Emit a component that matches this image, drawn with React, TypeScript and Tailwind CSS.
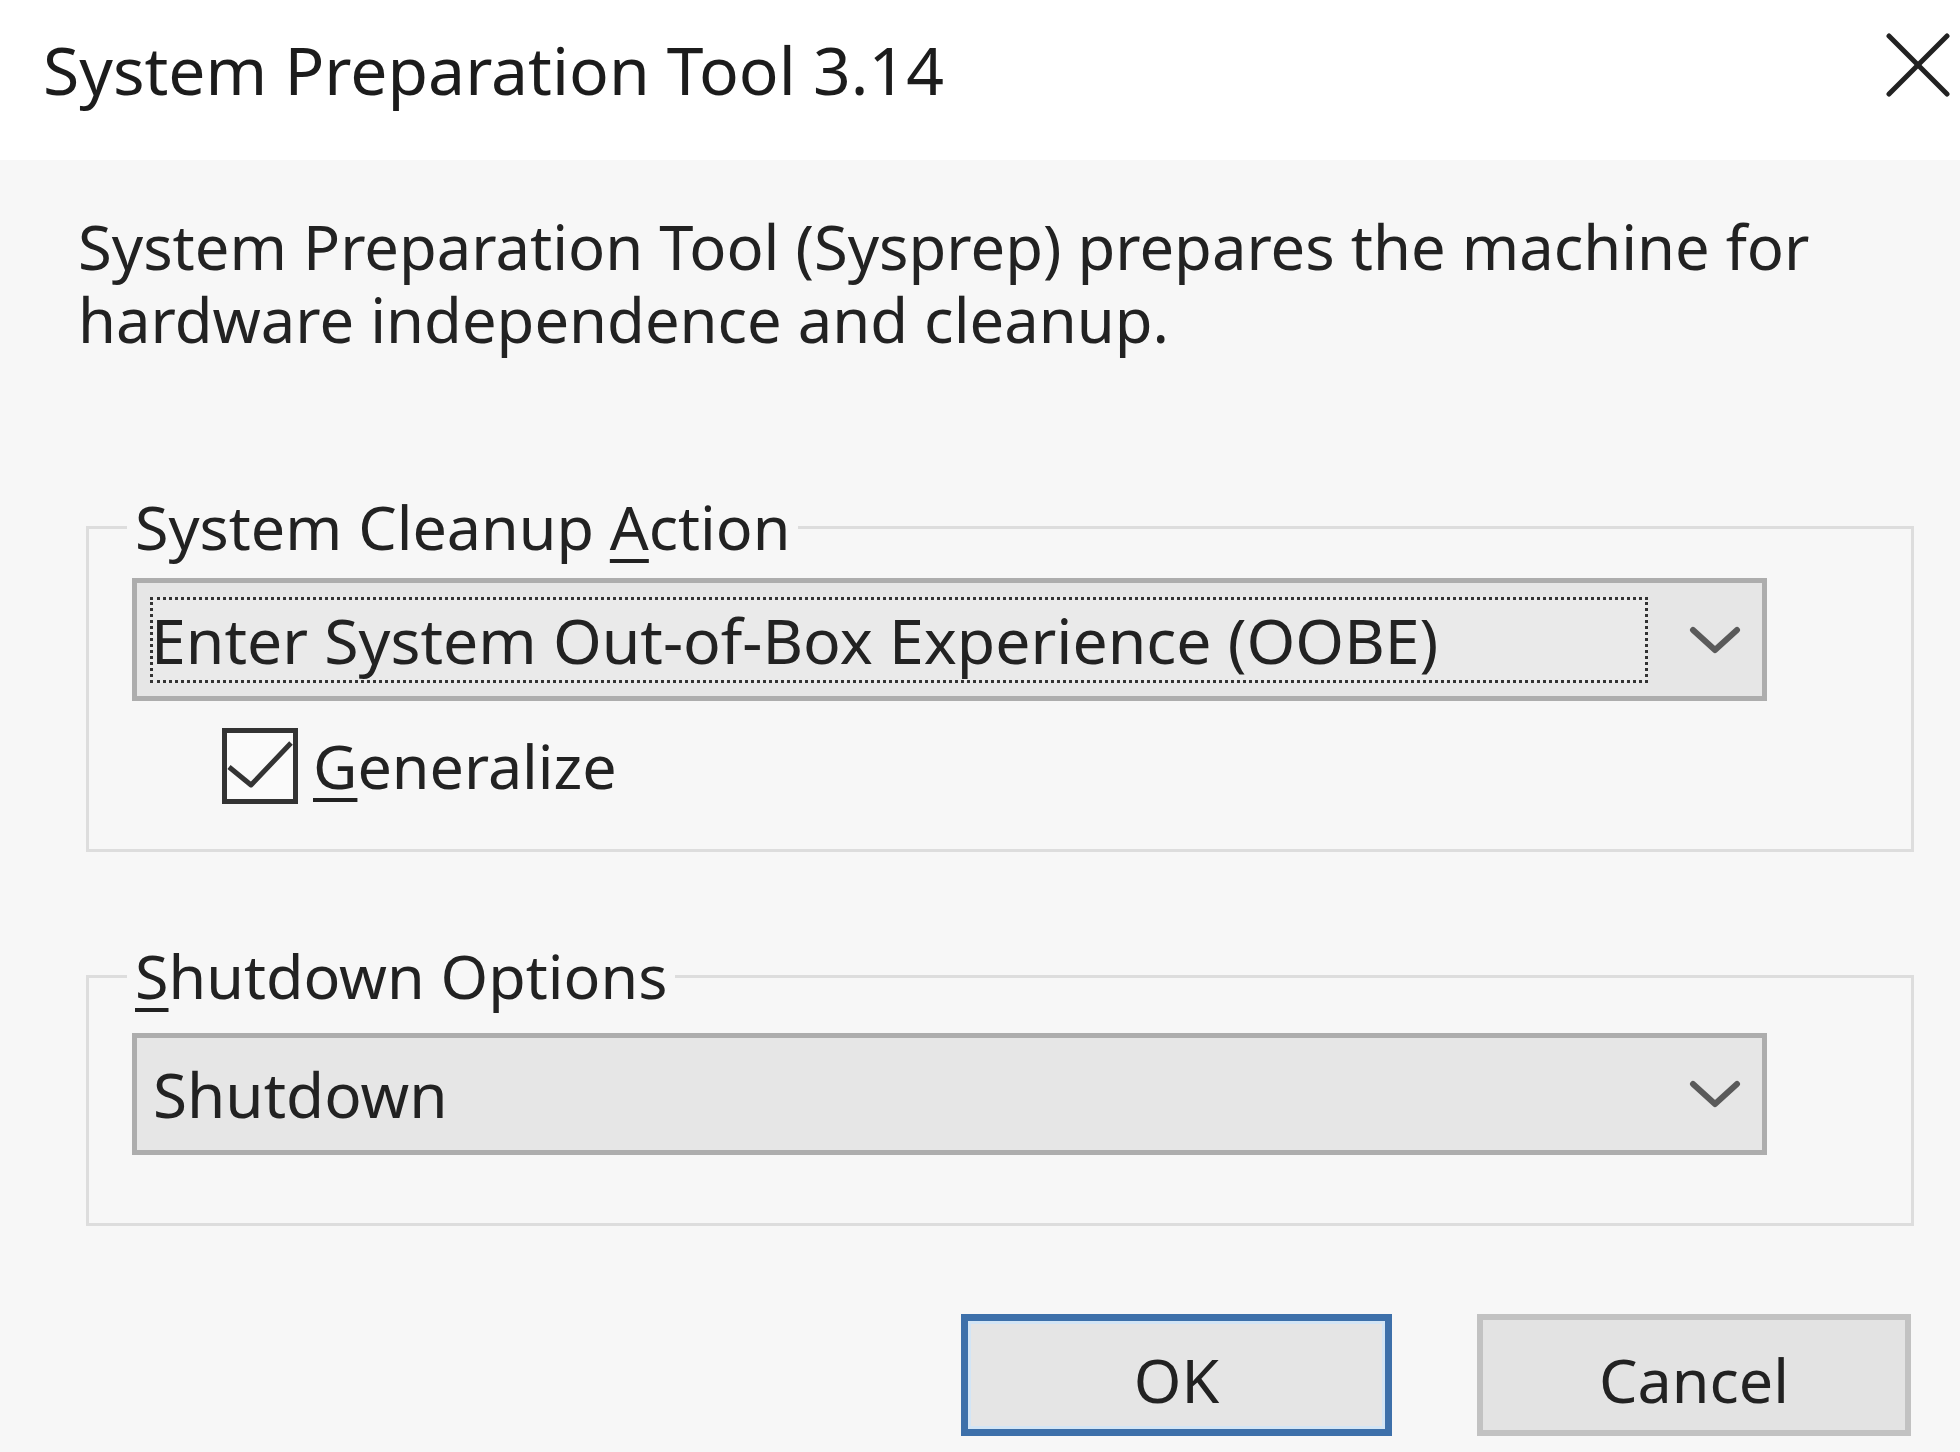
import React from "react";

function Chevron() {
  return (
    <svg width="52" height="30" viewBox="0 0 52 30" fill="none">
      <polyline points="4,5 26,25 48,5" stroke="#5a5a5a" strokeWidth="6" strokeLinecap="round" strokeLinejoin="round" />
    </svg>
  );
}

function U({ children }: { children: React.ReactNode }) {
  return <span className="underline decoration-[4px] underline-offset-[9px]">{children}</span>;
}

export default function App() {
  return (
    <div className="w-[1960px] h-[1452px] overflow-hidden bg-[#f7f7f7] flex flex-col font-['Noto_Sans',sans-serif] text-[#222222]">
      {/* Title bar */}
      <div className="h-[160px] shrink-0 bg-white flex items-start justify-between pl-[43px] pr-[10px]">
        <span className="pt-[36px] text-[66px] leading-none text-[#1c1c1c]">System Preparation Tool 3.14</span>
        <svg className="mt-[33px]" width="64" height="64" viewBox="0 0 64 64" fill="none">
          <line x1="3" y1="3" x2="61" y2="61" stroke="#222222" strokeWidth="5" strokeLinecap="round" />
          <line x1="61" y1="3" x2="3" y2="61" stroke="#222222" strokeWidth="5" strokeLinecap="round" />
        </svg>
      </div>

      {/* Description */}
      <p className="ml-[78px] mt-[50px] text-[61.5px] leading-[73px]">
        System Preparation Tool (Sysprep) prepares the machine for
        <br />
        hardware independence and cleanup.
      </p>

      {/* System Cleanup Action */}
      <fieldset className="shrink-0 ml-[86px] mr-[46px] mt-[141px] border-[3px] border-[#dddddd] pl-[43px] pr-[144px] pt-[21px] pb-[45px]">
        <legend className="ml-[-5px] px-[8px] text-[61px] leading-[60px]">
          System Cleanup <U>A</U>ction
        </legend>
        <div className="h-[123px] border-[5px] border-[#adadad] bg-[#e6e6e6] flex items-center">
          <div className="ml-[13px] flex-1 h-[86px] border-[3px] border-dotted border-[#333333] bg-[#eaeaea] flex items-center">
            <span className="text-[62.5px] leading-[60px] -ml-[2px]">Enter System Out-of-Box Experience (OOBE)</span>
          </div>
          <div className="w-[114px] flex justify-center pl-[20px]">
            <Chevron />
          </div>
        </div>
        <div className="mt-[27px] ml-[90px] flex items-center gap-[15px]">
          <div className="w-[76px] h-[76px] border-[5px] border-[#333333] bg-[#fafafa] flex items-center justify-center">
            <svg width="66" height="66" viewBox="0 0 66 66" fill="none">
              <polyline points="2,34 24,52 64,10" stroke="#333333" strokeWidth="5" strokeLinejoin="round" />
            </svg>
          </div>
          <span className="text-[61px] leading-[60px]">
            <U>G</U>eneralize
          </span>
        </div>
      </fieldset>

      {/* Shutdown Options */}
      <fieldset className="shrink-0 ml-[86px] mr-[46px] mt-[94px] border-[3px] border-[#dddddd] pl-[43px] pr-[144px] pt-[27px] pb-[68px]">
        <legend className="ml-[-5px] px-[8px] text-[61px] leading-[60px]">
          <U>S</U>hutdown Options
        </legend>
        <div className="h-[122px] border-[5px] border-[#adadad] bg-[#e6e6e6] flex items-center">
          <div className="ml-[16px] flex-1 flex items-center">
            <span className="text-[62px] leading-[60px]">Shutdown</span>
          </div>
          <div className="w-[114px] flex justify-center pl-[20px]">
            <Chevron />
          </div>
        </div>
      </fieldset>

      {/* Buttons */}
      <div className="shrink-0 mt-[88px] mr-[49px] flex justify-end gap-[85px]">
        <button className="w-[431px] h-[122px] border-[7px] border-[#3d70aa] bg-[#e5e5e5] shadow-[inset_0_0_0_3px_#d3e5f5] pt-[8px] text-[61px] leading-none text-[#222222] font-['Noto_Sans',sans-serif]">
          OK
        </button>
        <button className="w-[434px] h-[122px] border-[6px] border-[#c2c2c2] bg-[#e3e3e3] pt-[8px] text-[61px] leading-none text-[#222222] font-['Noto_Sans',sans-serif]">
          Cancel
        </button>
      </div>
    </div>
  );
}
